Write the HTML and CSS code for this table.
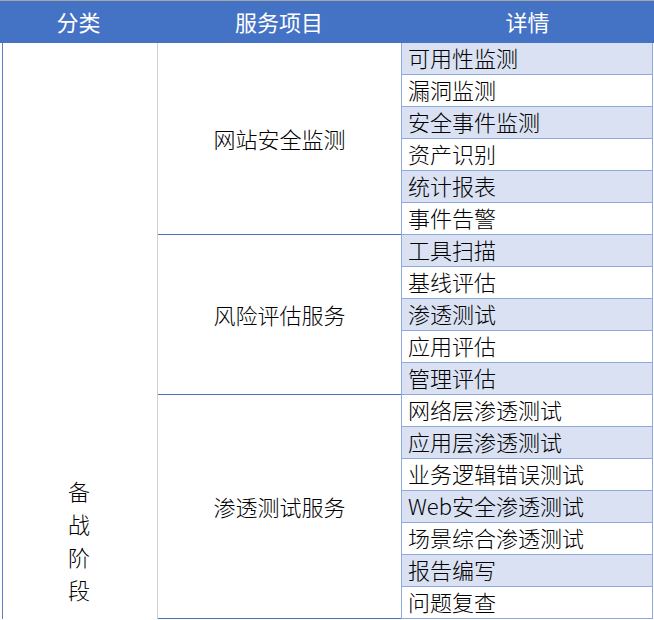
FILE: index.html
```html
<!DOCTYPE html>
<html lang="zh">
<head>
<meta charset="utf-8">
<link rel="stylesheet" href="styles.css">
</head>
<body>
<div class="sheet">
  <div class="head">
    <div class="h h1">分类</div>
    <div class="h h2">服务项目</div>
    <div class="h h3">详情</div>
  </div>
  <div class="body">
    <div class="cat"><span>备</span><span>战</span><span>阶</span><span>段</span></div>
    <div class="items">
      <div class="item g1">网站安全监测</div>
      <div class="item g2">风险评估服务</div>
      <div class="item g3">渗透测试服务</div>
    </div>
    <div class="details">
      <div class="row alt">可用性监测</div>
      <div class="row">漏洞监测</div>
      <div class="row alt">安全事件监测</div>
      <div class="row">资产识别</div>
      <div class="row alt">统计报表</div>
      <div class="row">事件告警</div>
      <div class="row alt">工具扫描</div>
      <div class="row">基线评估</div>
      <div class="row alt">渗透测试</div>
      <div class="row">应用评估</div>
      <div class="row alt">管理评估</div>
      <div class="row">网络层渗透测试</div>
      <div class="row alt">应用层渗透测试</div>
      <div class="row">业务逻辑错误测试</div>
      <div class="row alt">Web安全渗透测试</div>
      <div class="row">场景综合渗透测试</div>
      <div class="row alt">报告编写</div>
      <div class="row">问题复查</div>
    </div>
  </div>
</div>
</body>
</html>
```
FILE: styles.css
```css
* { box-sizing: border-box; }
html, body { margin: 0; padding: 0; background: #fff; }
body {
  font-family: "Noto Sans CJK SC", "Noto Sans", sans-serif;
  font-weight: 300;
  color: #000;
  width: 654px;
  height: 620px;
  overflow: hidden;
}
.sheet { width: 654px; }
.head {
  display: flex;
  height: 43px;
  background: #4472c4;
  border-top: 1px solid #a6a6a6;
  color: #fff;
  font-size: 22px;
  font-weight: 400;
}
.h {
  display: flex;
  align-items: center;
  justify-content: center;
  line-height: 1;
  padding-bottom: 3px;
}
.h1 { width: 157px; }
.h2 { width: 244px; }
.h3 { width: 253px; }
.body {
  display: flex;
  font-size: 22px;
}
.cat {
  width: 155px;
  margin-left: 2px;
  height: 576px;
  border-left: 1px solid #5b7fbf;
  display: flex;
  flex-direction: column;
  justify-content: flex-end;
  align-items: center;
  padding-bottom: 13px;
  padding-right: 2px;
}
.cat span { display: block; line-height: 33px; }
.items {
  width: 244px;
  display: flex;
  flex-direction: column;
  border-left: 1px solid #d0d0d0;
}
.item {
  display: flex;
  align-items: center;
  justify-content: center;
  border-bottom: 1px solid #4a70b5;
  padding-bottom: 2px;
}
.g1 { height: 192px; }
.g2 { height: 160px; }
.g3 { height: 224px; }
.details {
  width: 252px;
  border-left: 1px solid #8ea9db;
  border-right: 1px solid #8ea9db;
}
.row {
  height: 32px;
  line-height: 28px;
  padding-left: 6px;
  border-bottom: 1px solid #8ea9db;
  white-space: nowrap;
}
.row.alt { background: #d9e1f2; }
```
